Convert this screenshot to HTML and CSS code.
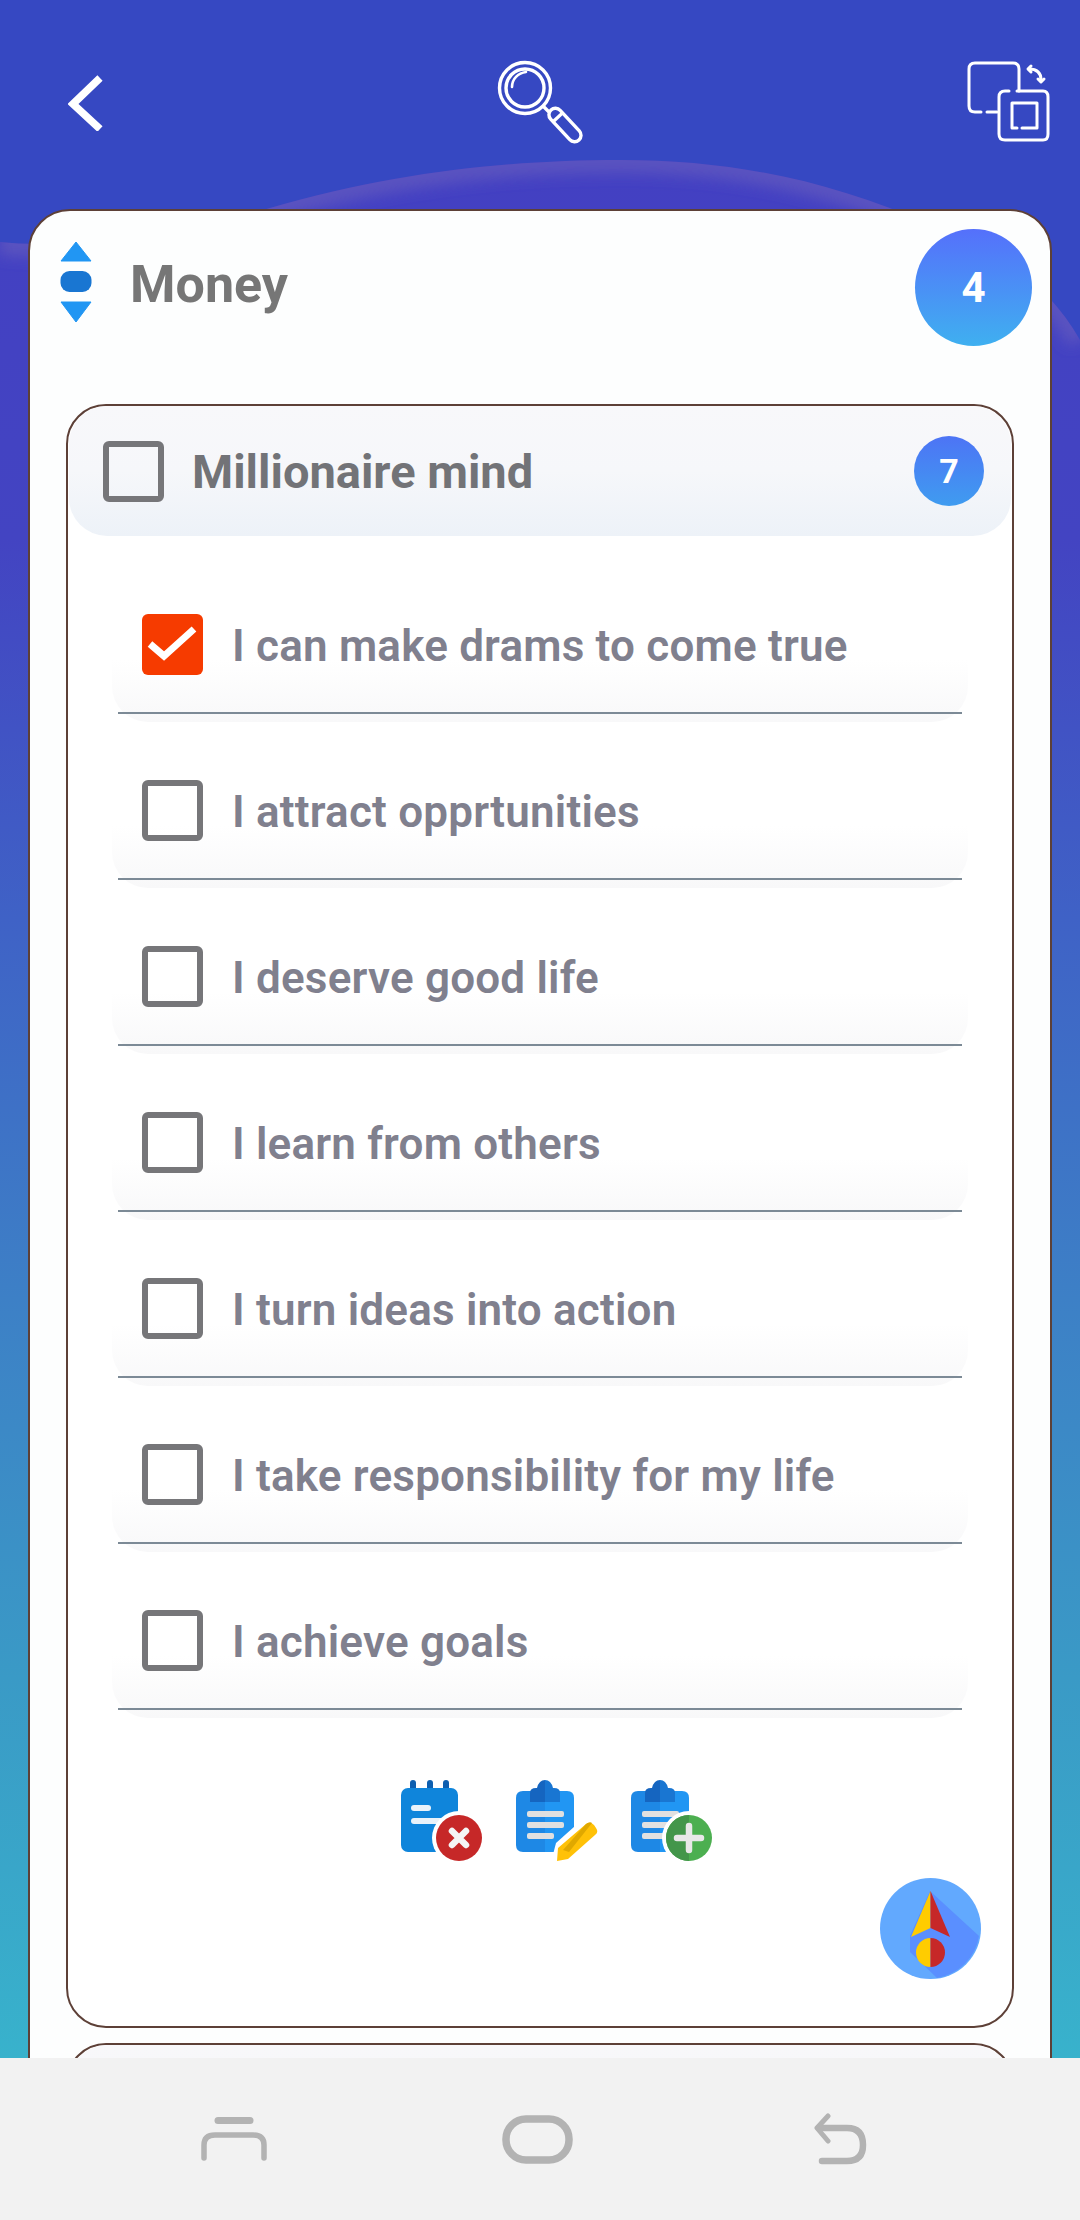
FILE: index.html
```html
<!DOCTYPE html>
<html lang="en">
<head>
    <meta charset="UTF-8">
    <meta name="viewport" content="width=device-width, initial-scale=1.0">
    <title>Money</title>
    <link rel="stylesheet" href="styles.css">
</head>
<body>

<div class="screen">
    <!-- wave behind the card, fades from purple down to teal -->
    <svg class="waves" width="1080" height="2058" viewBox="0 0 1080 2058">
        <defs>
            <linearGradient id="waveFill" gradientUnits="userSpaceOnUse" x1="0" y1="160" x2="0" y2="2058">
                <stop offset="0" stop-color="#4340c2"/>
                <stop offset="0.2" stop-color="#4344c2"/>
                <stop offset="0.4" stop-color="#3f62c6"/>
                <stop offset="0.6" stop-color="#3d80c6"/>
                <stop offset="0.8" stop-color="#3a9ac6"/>
                <stop offset="1" stop-color="#38b2cc"/>
            </linearGradient>
            <clipPath id="waveClip">
                <path d="M0 242 C70 250 190 232 270 208 C400 170 520 160 620 160 C730 160 830 180 930 225 C985 250 1040 270 1080 340 L1080 2058 L0 2058 Z"/>
            </clipPath>
            <filter id="soft"><feGaussianBlur stdDeviation="7"/></filter>
        </defs>
        <path d="M0 242 C70 250 190 232 270 208 C400 170 520 160 620 160 C730 160 830 180 930 225 C985 250 1040 270 1080 340 L1080 2058 L0 2058 Z" fill="url(#waveFill)"/>
        <g clip-path="url(#waveClip)">
            <path d="M0 242 C70 250 190 232 270 208 C400 170 520 160 620 160 C730 160 830 180 930 225 C985 250 1040 270 1080 340" fill="none" stroke="#5a52c0" stroke-width="26" filter="url(#soft)"/>
        </g>
    </svg>

    <header class="topbar">
        <svg class="back-icon" width="36" height="56" viewBox="0 0 36 56">
            <path d="M32 3 L5 29 L32 54" fill="none" stroke="#fff" stroke-width="7.5"/>
        </svg>
        <svg class="search-icon" width="86" height="86" viewBox="0 0 86 86">
            <g fill="none" stroke="#fff" stroke-width="3.4">
                <circle cx="28" cy="28" r="25.5"/>
                <circle cx="28" cy="28" r="19"/>
                <path d="M15 27 C15 19 21 13 29 12" stroke-linecap="round" stroke-width="2.6"/>
                <path d="M46 46 L52 52"/>
                <rect x="-6.5" y="0" width="13" height="41" rx="6.5" transform="translate(54 50) rotate(-43)"/>
                <path d="M-6.5 10 L6.5 10" transform="translate(54 50) rotate(-43)"/>
            </g>
        </svg>
        <svg class="rotate-icon" width="84" height="84" viewBox="0 0 84 84">
            <g fill="none" stroke="#fff" stroke-width="3" stroke-linecap="round" stroke-linejoin="round">
                <path d="M52 30 L52 8 Q52 2 46 2 L8 2 Q2 2 2 8 L2 45 Q2 51 8 51 L14 51 M20 51 L30 51"/>
                <path d="M42 30 L38 30 Q32 30 32 36 L32 73 Q32 79 38 79 L76 79 Q81 79 81 73 L81 36 Q81 30 76 30 L50 30"/>
                <path d="M55 67 L70 67 L70 42 L45 42 L45 67 L50 67"/>
                <path d="M62 8 C69 8 74 11 74 19"/>
                <path d="M64 5 L61 8 L64 11 M71 18 L74 21 L77 18"/>
            </g>
        </svg>
    </header>

    <main class="card">
        <div class="card-head">
            <svg class="sort-icon" width="32" height="82" viewBox="0 0 32 82">
                <path d="M16 1 L31 20 L1 20 Z" fill="#2196f3" stroke="#2196f3" stroke-width="1" stroke-linejoin="round"/>
                <rect x="0.5" y="30" width="31" height="21" rx="9" fill="#1976d2"/>
                <path d="M1 61 L31 61 L16 81 Z" fill="#2196f3" stroke="#2196f3" stroke-width="1" stroke-linejoin="round"/>
            </svg>
            <h1 class="card-title">Money</h1>
            <span class="badge badge-big">4</span>
        </div>

        <section class="group">
            <div class="group-head">
                <span class="box box-head"></span>
                <h2 class="group-title">Millionaire mind</h2>
                <span class="badge badge-small">7</span>
            </div>

            <ul class="rows">
                <li class="row"><div class="row-inner">
                    <span class="box box-checked">
                        <svg width="61" height="61" viewBox="0 0 61 61"><path d="M8 30 L22 42 L52 15" fill="none" stroke="#fff" stroke-width="7"/></svg>
                    </span>
                    <span class="row-text">I can make drams to come true</span>
                </div></li>
                <li class="row"><div class="row-inner"><span class="box"></span><span class="row-text">I attract opprtunities</span></div></li>
                <li class="row"><div class="row-inner"><span class="box"></span><span class="row-text">I deserve good life</span></div></li>
                <li class="row"><div class="row-inner"><span class="box"></span><span class="row-text">I learn from others</span></div></li>
                <li class="row"><div class="row-inner"><span class="box"></span><span class="row-text">I turn ideas into action</span></div></li>
                <li class="row"><div class="row-inner"><span class="box"></span><span class="row-text">I take responsibility for my life</span></div></li>
                <li class="row"><div class="row-inner"><span class="box"></span><span class="row-text">I achieve goals</span></div></li>
            </ul>

            <div class="actions">
                <!-- clear list -->
                <svg width="82" height="82" viewBox="0 0 82 82">
                    <g fill="#0d5fb0">
                        <rect x="9" y="0" width="6" height="12" rx="3"/>
                        <rect x="26" y="0" width="6" height="12" rx="3"/>
                        <rect x="42" y="0" width="6" height="12" rx="3"/>
                    </g>
                    <rect x="0" y="8" width="57" height="64" rx="7" fill="#0f85db"/>
                    <rect x="10" y="25" width="20" height="6" rx="3" fill="#e9f2fa"/>
                    <rect x="10" y="38" width="36" height="6" rx="3" fill="#e9f2fa"/>
                    <circle cx="58" cy="58" r="27" fill="#fff"/>
                    <circle cx="58" cy="58" r="23" fill="#c62828"/>
                    <path d="M51 51 L65 65 M65 51 L51 65" stroke="#f5f5f5" stroke-width="6.5" stroke-linecap="round"/>
                </svg>
                <!-- edit list -->
                <svg width="82" height="82" viewBox="0 0 82 82">
                    <path d="M7 11 L29 11 L29 72 L7 72 Q0 72 0 65 L0 18 Q0 11 7 11 Z" fill="#1e88e5"/>
                    <path d="M29 11 L51 11 Q58 11 58 18 L58 65 Q58 72 51 72 L29 72 Z" fill="#2196f3"/>
                    <path d="M14 22 L14 13 Q14 8 20 8 L21 8 Q23 0 29 0 L29 22 Z" fill="#1565c0"/>
                    <path d="M44 22 L44 13 Q44 8 38 8 L37 8 Q35 0 29 0 L29 22 Z" fill="#1976d2"/>
                    <g fill="#e0e0e0">
                        <rect x="11" y="31" width="37" height="6" rx="2"/>
                        <rect x="11" y="42" width="37" height="6" rx="2"/>
                        <rect x="11" y="53" width="27" height="6" rx="2"/>
                    </g>
                    <path d="M40 63 L68 38 L84 56 L48 86 L34 86 Z" fill="#fff"/>
                    <path d="M41 81 L42 68 L70 44 Q74 41 78 45 L80 48 Q83 52 79 55 L52 79 Z" fill="#ffc107"/>
                    <path d="M47 70 L70 44 Q74 41 76 43 L53 72 Z" fill="#e0a800"/>
                </svg>
                <!-- add to list -->
                <svg width="82" height="82" viewBox="0 0 82 82">
                    <path d="M7 11 L29 11 L29 72 L7 72 Q0 72 0 65 L0 18 Q0 11 7 11 Z" fill="#1e88e5"/>
                    <path d="M29 11 L51 11 Q58 11 58 18 L58 65 Q58 72 51 72 L29 72 Z" fill="#2196f3"/>
                    <path d="M14 22 L14 13 Q14 8 20 8 L21 8 Q23 0 29 0 L29 22 Z" fill="#1565c0"/>
                    <path d="M44 22 L44 13 Q44 8 38 8 L37 8 Q35 0 29 0 L29 22 Z" fill="#1976d2"/>
                    <g fill="#e0e0e0">
                        <rect x="11" y="31" width="37" height="6" rx="2"/>
                        <rect x="11" y="42" width="37" height="6" rx="2"/>
                        <rect x="11" y="53" width="27" height="6" rx="2"/>
                    </g>
                    <circle cx="58" cy="58" r="27" fill="#fff"/>
                    <circle cx="58" cy="58" r="23" fill="#4caf50"/>
                    <path d="M58 35 A23 23 0 0 0 58 81 Z" fill="#43964a"/>
                    <path d="M46 58 L70 58 M58 46 L58 70" stroke="#e8e8e8" stroke-width="6.5" stroke-linecap="round"/>
                </svg>
            </div>

            <div class="compass-wrap">
                <svg width="101" height="101" viewBox="0 0 101 101">
                    <circle cx="50.5" cy="50.5" r="50.5" fill="#62a9fe"/>
                    <path d="M50 13 L99 58 A50.5 50.5 0 0 1 57 100 L30 74 L30 58 Z" fill="#5a8fff"/>
                    <path d="M50.5 13 L31 59 L50.5 50 Z" fill="#ffcc00"/>
                    <path d="M50.5 13 L70 59 L50.5 50 Z" fill="#c62828"/>
                    <path d="M50.5 60 A14.5 14.5 0 0 0 50.5 89 Z" fill="#ffcc00"/>
                    <path d="M50.5 60 A14.5 14.5 0 0 1 50.5 89 Z" fill="#c62828"/>
                </svg>
            </div>
        </section>

        <section class="group group-next">
            <div class="group-head"></div>
        </section>
    </main>
</div>

<nav class="navbar">
    <svg width="66" height="44" viewBox="0 0 66 44">
        <g fill="none" stroke="#b3b3b3" stroke-linecap="round">
            <path d="M17 3.5 L49 3.5" stroke-width="7"/>
            <path d="M3 41 L3 28 Q3 18 14 18 L52 18 Q63 18 63 28 L63 41" stroke-width="5.5"/>
        </g>
    </svg>
    <svg width="71" height="49" viewBox="0 0 71 49">
        <rect x="4" y="4" width="63" height="41" rx="20" fill="none" stroke="#b3b3b3" stroke-width="7.5"/>
    </svg>
    <svg width="54" height="52" viewBox="0 0 54 52">
        <g fill="none" stroke="#b3b3b3" stroke-linecap="round">
            <path d="M15 3 L4 15 L15 28" stroke-width="5" stroke-linejoin="round"/>
            <path d="M6 15 L34 15 Q50 15 50 32 Q50 48 34 48 L9 48" stroke-width="6.5"/>
        </g>
    </svg>
</nav>

</body>
</html>
```

FILE: styles.css
```css
* {
    box-sizing: border-box;
}
html, body {
    margin: 0;
    padding: 0;
}
body {
    width: 1080px;
    height: 2220px;
    overflow: hidden;
    font-family: Roboto, Arial, sans-serif;
    display: flex;
    flex-direction: column;
}
.screen {
    position: relative;
    height: 2058px;
    overflow: hidden;
    background: #3648c2;
}
.waves {
    position: absolute;
    top: 0;
    left: 0;
}

/* top bar */
.topbar {
    position: relative;
    height: 209px;
}
.back-icon {
    position: absolute;
    left: 68px;
    top: 75px;
}
.search-icon {
    position: absolute;
    left: 497px;
    top: 60px;
}
.rotate-icon {
    position: absolute;
    left: 967px;
    top: 61px;
}

/* white card */
.card {
    position: relative;
    margin: 0 28px;
    height: 1900px;
    background: #fdfefe;
    border: 2px solid #5d4037;
    border-radius: 42px 42px 0 0;
}
.card-head {
    display: flex;
    align-items: flex-start;
    height: 193px;
    padding: 30px 0 0 30px;
}
.sort-icon {
    flex: none;
}
.card-title {
    margin: 14px 0 0 38px;
    font-size: 52px;
    line-height: 60px;
    font-weight: 700;
    color: #767676;
    flex: 1;
}
.badge {
    display: flex;
    align-items: center;
    justify-content: center;
    border-radius: 50%;
    color: #fff;
    font-weight: 700;
    background: linear-gradient(180deg, #5570fb 0%, #3fb0f0 100%);
}
.badge-big {
    width: 117px;
    height: 117px;
    margin: -12px 18px 0 0;
    font-size: 42px;
}
.badge-small {
    width: 70px;
    height: 70px;
    font-size: 34px;
    background: linear-gradient(180deg, #4d74f5 0%, #3f9cf0 100%);
}

/* bordered groups */
.group {
    margin: 0 36px;
    height: 1624px;
    border: 2px solid #5d4037;
    border-radius: 40px;
    background: #fff;
}
.group-next {
    margin-top: 15px;
    height: 200px;
}
.group-head {
    display: flex;
    align-items: center;
    height: 130px;
    margin: 0 1px;
    padding: 0 27px 0 34px;
    background: linear-gradient(180deg, #f8f8fa 0%, #f6f7fa 50%, #edf2f8 100%);
    border-radius: 38px;
}
.group-title {
    margin: 0 0 0 28px;
    font-size: 47px;
    font-weight: 700;
    color: #727377;
    flex: 1;
}
.box {
    flex: none;
    display: flex;
    align-items: center;
    justify-content: center;
    width: 61px;
    height: 61px;
    border: 6px solid #767679;
    border-radius: 6px;
}
.box-checked {
    background: #f63b00;
    border: none;
}

/* checklist rows */
.rows {
    list-style: none;
    margin: 48px 0 0;
    padding: 0 44px;
}
.row {
    padding: 0 6px 8px;
    margin-bottom: 28px;
    border-radius: 36px;
    background: linear-gradient(180deg, #fff 0%, #fff 55%, #f8f8f9 100%);
}
.row:last-child {
    margin-bottom: 0;
}
.row-inner {
    display: flex;
    align-items: center;
    height: 130px;
    padding: 0 0 8px 24px;
    border-bottom: 2px solid #7c8a96;
}
.row-text {
    margin: 3px 0 0 29px;
    font-size: 44px;
    font-weight: 600;
    letter-spacing: 0.2px;
    color: #80808e;
}

/* action icons */
.actions {
    display: flex;
    justify-content: center;
    gap: 33px;
    margin: 62px 0 0 33px;
}
.actions svg {
    overflow: visible;
}
.compass-wrap {
    display: flex;
    justify-content: flex-end;
    margin: 16px 31px 0 0;
}

/* bottom navigation */
.navbar {
    flex: 1;
    display: grid;
    grid-template-columns: repeat(3, 303px);
    justify-content: center;
    justify-items: center;
    align-items: center;
    background: #f2f2f2;
    padding-right: 6px;
}
```
